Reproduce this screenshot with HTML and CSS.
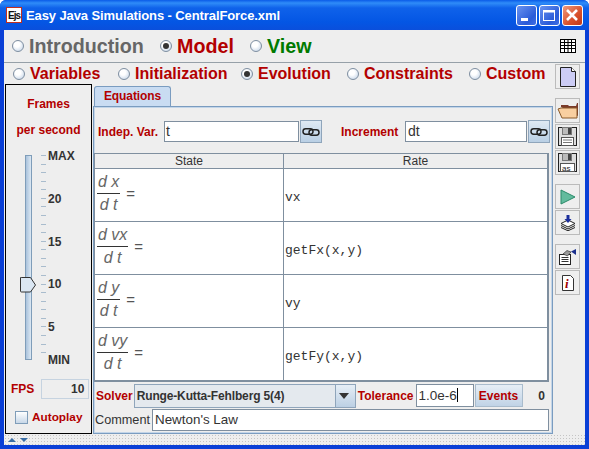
FILE: index.html
```html
<!DOCTYPE html>
<html lang="en">
<head>
<meta charset="utf-8">
<title>Easy Java Simulations - CentralForce.xml</title>
<link rel="stylesheet" href="styles.css">
</head>
<body>
<div class="window">
  <header class="titlebar">
    <div class="app-icon"><span>Ejs</span></div>
    <div class="title">Easy Java Simulations - CentralForce.xml</div>
    <div class="win-btns">
      <div class="win-btn"><svg width="21" height="21" viewBox="0 0 21 21"><rect x="5" y="13" width="7" height="3" fill="#fff"/></svg></div>
      <div class="win-btn"><svg width="21" height="21" viewBox="0 0 21 21"><rect x="4.500" y="5.500" width="11" height="10" fill="none" stroke="#fff"/><rect x="4" y="5" width="12" height="2.500" fill="#fff"/></svg></div>
      <div class="win-btn close"><svg width="21" height="21" viewBox="0 0 21 21"><path d="M5 5l10 10M15 5L5 15" stroke="#fff" stroke-width="2.600"/></svg></div>
    </div>
  </header>
  <div class="client">
    <nav class="mainnav">
      <label class="radio big grey"><i class="dot"></i>Introduction</label>
      <label class="radio big red"><i class="dot on"></i>Model</label>
      <label class="radio big green"><i class="dot"></i>View</label>
      <svg class="grid-icon" width="16" height="14" viewBox="0 0 16 14"><rect x=".5" y=".5" width="15" height="13" fill="#fff" stroke="#000"/><path d="M.5 3.500h15M.5 6.500h15M.5 9.500h15M4.500 1v12M8 1v12M11.500 1v12" stroke="#000"/></svg>
    </nav>
    <div class="workspace">
      <div class="center">
        <nav class="subnav">
          <label class="radio"><i class="dot"></i>Variables</label>
          <label class="radio"><i class="dot"></i>Initialization</label>
          <label class="radio"><i class="dot on"></i>Evolution</label>
          <label class="radio"><i class="dot"></i>Constraints</label>
          <label class="radio"><i class="dot"></i>Custom</label>
        </nav>
        <div class="body">
          <aside class="fps">
            <div class="fps-head">Frames</div>
            <div class="fps-head second">per second</div>
            <div class="slider">
              <div class="track"><svg class="thumb" width="17" height="16" viewBox="0 0 17 16"><path d="M1.500.5h9l5 7.500-5 7h-9a1 1 0 0 1-1-1v-13a1 1 0 0 1 1-1z" fill="#dbe7f3" stroke="#333"/></svg></div>
              <div class="ticks"></div>
              <div class="scale">
                <span>MAX</span><span>20</span><span>15</span><span>10</span><span>5</span><span>MIN</span>
              </div>
            </div>
            <div class="fps-value"><b>FPS</b><output>10</output></div>
            <label class="autoplay"><i class="check"></i>Autoplay</label>
          </aside>
          <section class="editor">
            <div class="tab">Equations</div>
            <div class="tabpanel">
              <div class="vars">
                <span class="lbl indep">Indep. Var.</span>
                <span class="field tfield">t</span>
                <button class="link" type="button"><svg width="18" height="8" viewBox="0 0 18 8"><rect x="1" y=".8" width="10" height="5.500" rx="2.700" fill="none" stroke="#222" stroke-width="1.500"/><rect x="7" y="1.700" width="10" height="5.500" rx="2.700" fill="none" stroke="#222" stroke-width="1.500"/></svg></button>
                <span class="lbl incr">Increment</span>
                <span class="field dtfield">dt</span>
                <button class="link" type="button"><svg width="18" height="8" viewBox="0 0 18 8"><rect x="1" y=".8" width="10" height="5.500" rx="2.700" fill="none" stroke="#222" stroke-width="1.500"/><rect x="7" y="1.700" width="10" height="5.500" rx="2.700" fill="none" stroke="#222" stroke-width="1.500"/></svg></button>
              </div>
              <div class="table">
                <div class="th">State</div><div class="th">Rate</div>
                <div class="td"><span class="frac"><span>d x</span><span>d t</span></span><span class="eq">=</span></div><div class="td code">vx</div>
                <div class="td"><span class="frac"><span>d vx</span><span>d t</span></span><span class="eq">=</span></div><div class="td code">getFx(x,y)</div>
                <div class="td"><span class="frac"><span>d y</span><span>d t</span></span><span class="eq">=</span></div><div class="td code">vy</div>
                <div class="td"><span class="frac"><span>d vy</span><span>d t</span></span><span class="eq">=</span></div><div class="td code">getFy(x,y)</div>
              </div>
              <div class="solver">
                <span class="lbl">Solver</span>
                <div class="combo"><span>Runge-Kutta-Fehlberg 5(4)</span><i class="arrow"></i></div>
                <span class="lbl tol-lbl">Tolerance</span>
                <span class="field tol">1.0e-6<i class="caret"></i></span>
                <button class="events" type="button">Events</button>
                <span class="count">0</span>
              </div>
              <div class="comment">
                <span>Comment</span>
                <span class="field cfield">Newton's Law</span>
              </div>
            </div>
          </section>
        </div>
      </div>
      <div class="tools">
        <div class="group">
          <div class="tool"><svg width="18" height="22" viewBox="0 0 18 22"><path d="M1.500 1.500h11l4 4v15h-15z" fill="#ccccf5" stroke="#222"/><path d="M12.500 1.500v4h4" fill="#fff" stroke="#222"/></svg></div>
        </div>
        <div class="group">
          <div class="tool"><svg width="22" height="18" viewBox="0 0 22 18"><path d="M4 5V3h7l1 1h7l1-3 1 0v13z" fill="#7a3b2a"/><path d="M4 6h16v10H5L1 7z" fill="#f9cfa0" stroke="#8a5a2a"/></svg></div>
          <div class="tool"><svg width="19" height="19" viewBox="0 0 19 19"><rect x=".5" y=".5" width="18" height="18" fill="#ddd" stroke="#222"/><rect x="4.500" y=".5" width="9" height="7" fill="#bbb" stroke="#777"/><rect x="10" y="1" width="3" height="6" fill="#444"/><rect x="3.500" y="10.500" width="12" height="8" fill="#fff" stroke="#555"/><path d="M5 13h9M5 15.500h9" stroke="#777"/></svg></div>
          <div class="tool"><svg width="19" height="19" viewBox="0 0 19 19"><rect x=".5" y=".5" width="18" height="18" fill="#ddd" stroke="#222"/><rect x="4.500" y=".5" width="9" height="7" fill="#bbb" stroke="#777"/><rect x="10" y="1" width="3" height="6" fill="#444"/><rect x="2.500" y="10.500" width="14" height="8" fill="#fff" stroke="#555"/><text x="4" y="17.500" class="as">as</text></svg></div>
        </div>
        <div class="group">
          <div class="tool"><svg width="16" height="16" viewBox="0 0 16 16"><path d="M1 1l14 7-14 7z" fill="#62bb9d" stroke="#2a8a6a"/></svg></div>
          <div class="tool"><svg width="16" height="16" viewBox="0 0 16 16"><path d="M1 8.500L8 5l7 3.500L8 12z" fill="#fff" stroke="#222"/><path d="M1 10.500L8 14l7-3.500M1 12.500L8 15.800l7-3.300" fill="none" stroke="#222"/><path d="M6.500 0h3v4h2L8 8 4.500 4h2z" fill="#1c2f9c"/></svg></div>
        </div>
        <div class="group">
          <div class="tool"><svg width="17" height="16" viewBox="0 0 17 16"><rect x=".5" y="5.500" width="11" height="10" fill="#fff" stroke="#222"/><path d="M2.500 8.500h7M2.500 10.500h7M2.500 12.500h7" stroke="#333"/><path d="M4 5l4-3.500 4 1.500-3.500 4z" fill="#999" stroke="#222" stroke-width=".6"/><path d="M12 2.500L17 0v6z" fill="#1a2f8c"/></svg></div>
          <div class="tool"><svg width="12" height="16" viewBox="0 0 12 16"><path d="M.5.5h8l3 3v12H.5z" fill="#fff" stroke="#333"/><text x="3" y="13" class="info">i</text></svg></div>
        </div>
      </div>
    </div>
    <footer class="splitter"><i class="up"></i><i class="down"></i></footer>
  </div>
</div>
</body>
</html>
```
FILE: styles.css
```css
* { box-sizing: border-box; }
html, body { margin: 0; padding: 0; }
body { width: 589px; height: 449px; overflow: hidden; font-family: "Liberation Sans", Arial, sans-serif; }
.window { width: 589px; height: 449px; display: flex; flex-direction: column; background: #0a3fd6; border-radius: 6px 6px 0 0; overflow: hidden; }

.titlebar { height: 30px; flex: none; display: flex; align-items: center; padding: 0 6px 0 6px; background: linear-gradient(#0a5be8 0, #2f8cf8 3px, #0f62ea 8px, #0456e4 22px, #0a4fdc 30px); }
.app-icon { width: 16px; height: 16px; background: #fff; border: 1px solid #c03020; display: flex; align-items: center; justify-content: center; }
.app-icon span { font: bold 10px "Liberation Sans", sans-serif; color: #111; letter-spacing: -1px; }
.title { margin-left: 4px; font: bold 13px "Liberation Sans", sans-serif; letter-spacing: -.1px; color: #fff; }
.win-btns { margin-left: auto; display: flex; gap: 2px; }
.win-btn { width: 21px; height: 21px; border: 1px solid #fff; border-radius: 3px; background: linear-gradient(135deg, #6a93f0, #2a5bd8 70%, #3f6fe5); }
.win-btn svg { display: block; margin: -1px; }
.win-btn.close { background: linear-gradient(135deg, #ee9a80, #d8502a 60%, #c03818); }

.client { flex: 1; margin: 0 4px 4px; background: #eeeeee; display: flex; flex-direction: column; min-height: 0; }

.radio { display: flex; align-items: center; font-weight: bold; font-size: 16px; color: #b30000; white-space: nowrap; }
.dot { flex: none; width: 12px; height: 12px; border-radius: 50%; border: 1px solid #7e8ea0; background: radial-gradient(circle at 40% 35%, #fff 30%, #c5d5e8 90%); margin-right: 5px; position: relative; }
.dot.on::after { content: ""; position: absolute; left: 2px; top: 2px; width: 6px; height: 6px; border-radius: 50%; background: #333; }

.mainnav { height: 33px; flex: none; border-bottom: 1px solid #96a0a8; display: grid; grid-template-columns: 148px 90px auto 1fr; align-items: center; padding: 0 9px 0 8px; }
.big { font-size: 19.700px; }
.grey { color: #666; }
.green { color: #007a00; }
.grid-icon { justify-self: end; }

.workspace { flex: 1; display: flex; min-height: 0; }
.center { width: 549px; flex: none; display: flex; flex-direction: column; }
.subnav { height: 21px; flex: none; display: grid; grid-template-columns: 105px 123px 106px 122px auto; align-items: center; padding-left: 9px; }

.body { flex: 1; display: flex; min-height: 0; padding-left: 1px; }
.fps { width: 87px; flex: none; border: 1px solid #000; display: flex; flex-direction: column; align-items: center; height: 350px; }
.fps-head { font-weight: bold; font-size: 12px; color: #b30000; margin-top: 12px; line-height: 14px; }
.fps-head.second { margin-top: 12px; }
.slider { position: relative; width: 85px; height: 206px; margin-top: 18px; display: flex; }
.track { position: relative; margin-left: 19px; width: 7px; height: 205px; border: 1px solid #7f9db9; background: linear-gradient(90deg, #a9c2dc, #dce8f3); }
.thumb { position: absolute; left: -6px; top: 121px; }
.ticks { margin-left: 9px; width: 5px; height: 206px; background: repeating-linear-gradient(#a9bccd 0 1px, transparent 1px 8.570px); }
.scale { margin-left: 2px; height: 206px; margin-top: -6px; display: grid; grid-template-rows: repeat(4, 42.800px) 33px 14px; font-weight: bold; font-size: 12px; line-height: 14px; color: #333; }
.fps-value { width: 85px; display: flex; align-items: center; margin-top: 18px; padding-left: 5px; }
.fps-value b { font-size: 12px; color: #b30000; }
.fps-value output { margin-left: 7px; width: 48px; height: 20px; border: 1px solid #c6d3e0; font-weight: bold; font-size: 12px; color: #333; text-align: right; padding: 2px 4px; line-height: 15px; }
.autoplay { width: 85px; display: flex; align-items: center; margin-top: 11px; padding-left: 9px; font-weight: bold; font-size: 11.800px; color: #b30000; }
.check { width: 13px; height: 13px; border: 1px solid #7f9db9; background: linear-gradient(#fff, #c8d8e8); margin-right: 4px; }

.editor { flex: 1; min-width: 0; margin-left: 1px; display: flex; flex-direction: column; height: 350px; }
.tab { width: 77px; height: 21px; margin-top: 2px; margin-left: 1px; background: #c9dcf2; border: 1px solid #7a9cc0; border-bottom: 0; border-radius: 3px 3px 0 0; font-weight: bold; font-size: 12px; letter-spacing: -.1px; color: #b30000; text-align: center; line-height: 18px; flex: none; }
.tabpanel { flex: 1; width: 460px; border: 2px solid #c3d5e8; outline: 1px solid #7a9cc0; outline-offset: -1px; margin-top: -1px; display: flex; flex-direction: column; padding: 12px 0 0 1px; background: #eeeeee; }
.lbl { font-weight: bold; font-size: 12px; color: #b30000; white-space: nowrap; }
.field { background: #fff; border: 1px solid #7f8f9f; font-size: 14px; color: #333; padding-left: 2px; line-height: 19px; display: block; }
.vars { display: flex; align-items: center; height: 23px; flex: none; }
.indep { margin-left: 2px; width: 66px; }
.tfield { width: 135px; height: 21px; padding-left: 1px; }
.link { width: 22px; height: 23px; margin-left: 1px; padding: 0; border: 1px solid #8fa5bb; background: linear-gradient(#dfe9f3, #b9cfe4); display: flex; align-items: center; justify-content: center; }
.incr { margin-left: 19px; width: 64px; }
.dtfield { width: 122px; height: 21px; }
.table { width: 455px; height: 229px; margin: 10px 0 0 -2px; border: 2px solid #7f8f9f; border-top-width: 1px; border-left-width: 1px; display: grid; grid-template-columns: 189px 1fr; grid-template-rows: 15px 53px 53px 53px 1fr; background: #fff; flex: none; }
.th { background: #eeeeee; border-bottom: 1px solid #7f8f9f; font-size: 12px; line-height: 14px; color: #333; text-align: center; }
.td { border-bottom: 1px solid #7f8f9f; display: flex; align-items: center; padding: 0 0 4px 2px; }
.th:nth-child(odd), .td:nth-child(odd) { border-right: 1px solid #7f8f9f; }
.td:nth-last-child(-n+2) { border-bottom: 0; }
.td.code { font: 13px "Liberation Mono", monospace; color: #333; padding: 5px 0 0 1px; }
.frac { display: inline-flex; flex-direction: column; font-style: italic; font-size: 16px; color: #666; text-align: center; line-height: 22px; }
.frac span { padding: 0 1px; }
.frac span:first-child { border-bottom: 1px solid #333; }
.eq { font-size: 15px; color: #555; margin-left: 6px; }
.solver { display: flex; align-items: center; height: 25px; margin-top: 1px; flex: none; }
.combo { width: 222px; height: 24px; margin-left: 1px; border: 1px solid #8fa5bb; background: #e4e9ee; display: flex; align-items: center; font-weight: bold; font-size: 12px; letter-spacing: -.15px; color: #333; padding-left: 2px; }
.arrow { margin-left: auto; width: 20px; height: 22px; border-left: 1px solid #8fa5bb; background: linear-gradient(#e6eef6, #bcd0e4); position: relative; }
.arrow::after { content: ""; position: absolute; left: 3px; top: 8px; border: 5px solid transparent; border-top: 6px solid #333; border-bottom: 0; }
.tol-lbl { margin-left: 2px; }
.tol { width: 58px; height: 23px; margin-left: 2px; position: relative; padding-left: 2px; font-size: 13.500px; line-height: 22px; }
.caret { display: inline-block; width: 1px; height: 14px; background: #000; vertical-align: -2px; }
.events { width: 48px; height: 23px; margin-left: 1px; padding: 0; border: 1px solid #a9bccd; background: linear-gradient(#e6eef6, #c0d3e6); font: bold 12px "Liberation Sans", sans-serif; color: #b30000; }
.count { margin-left: auto; margin-right: 6px; font-weight: bold; font-size: 12px; color: #333; }
.comment { display: flex; align-items: center; height: 23px; margin-left: -1px; flex: none; font-size: 12.700px; color: #333; }
.cfield { width: 397px; height: 22px; margin-left: 2px; font-size: 13.400px; }

.tools { flex: 1; display: flex; flex-direction: column; padding: 1px 0 0 2px; }
.group { display: flex; flex-direction: column; gap: 1px; margin-bottom: 9px; }
.tool { width: 25px; height: 25px; border: 1px solid #bbb; display: flex; align-items: center; justify-content: center; }
.as { font: 8px "Liberation Sans", sans-serif; fill: #222; }
.info { font: italic bold 13px "Liberation Serif", serif; fill: #a00000; }

.splitter { height: 11px; flex: none; display: flex; align-items: center; gap: 4px; padding-left: 4px; background: #eeeeee radial-gradient(#c4c4c4 35%, transparent 40%) 0 0 / 3px 3px; }
.up { border: 4px solid transparent; border-bottom: 4px solid #3a6ea5; border-top: 0; }
.down { border: 4px solid transparent; border-top: 4px solid #3a6ea5; border-bottom: 0; }
```
